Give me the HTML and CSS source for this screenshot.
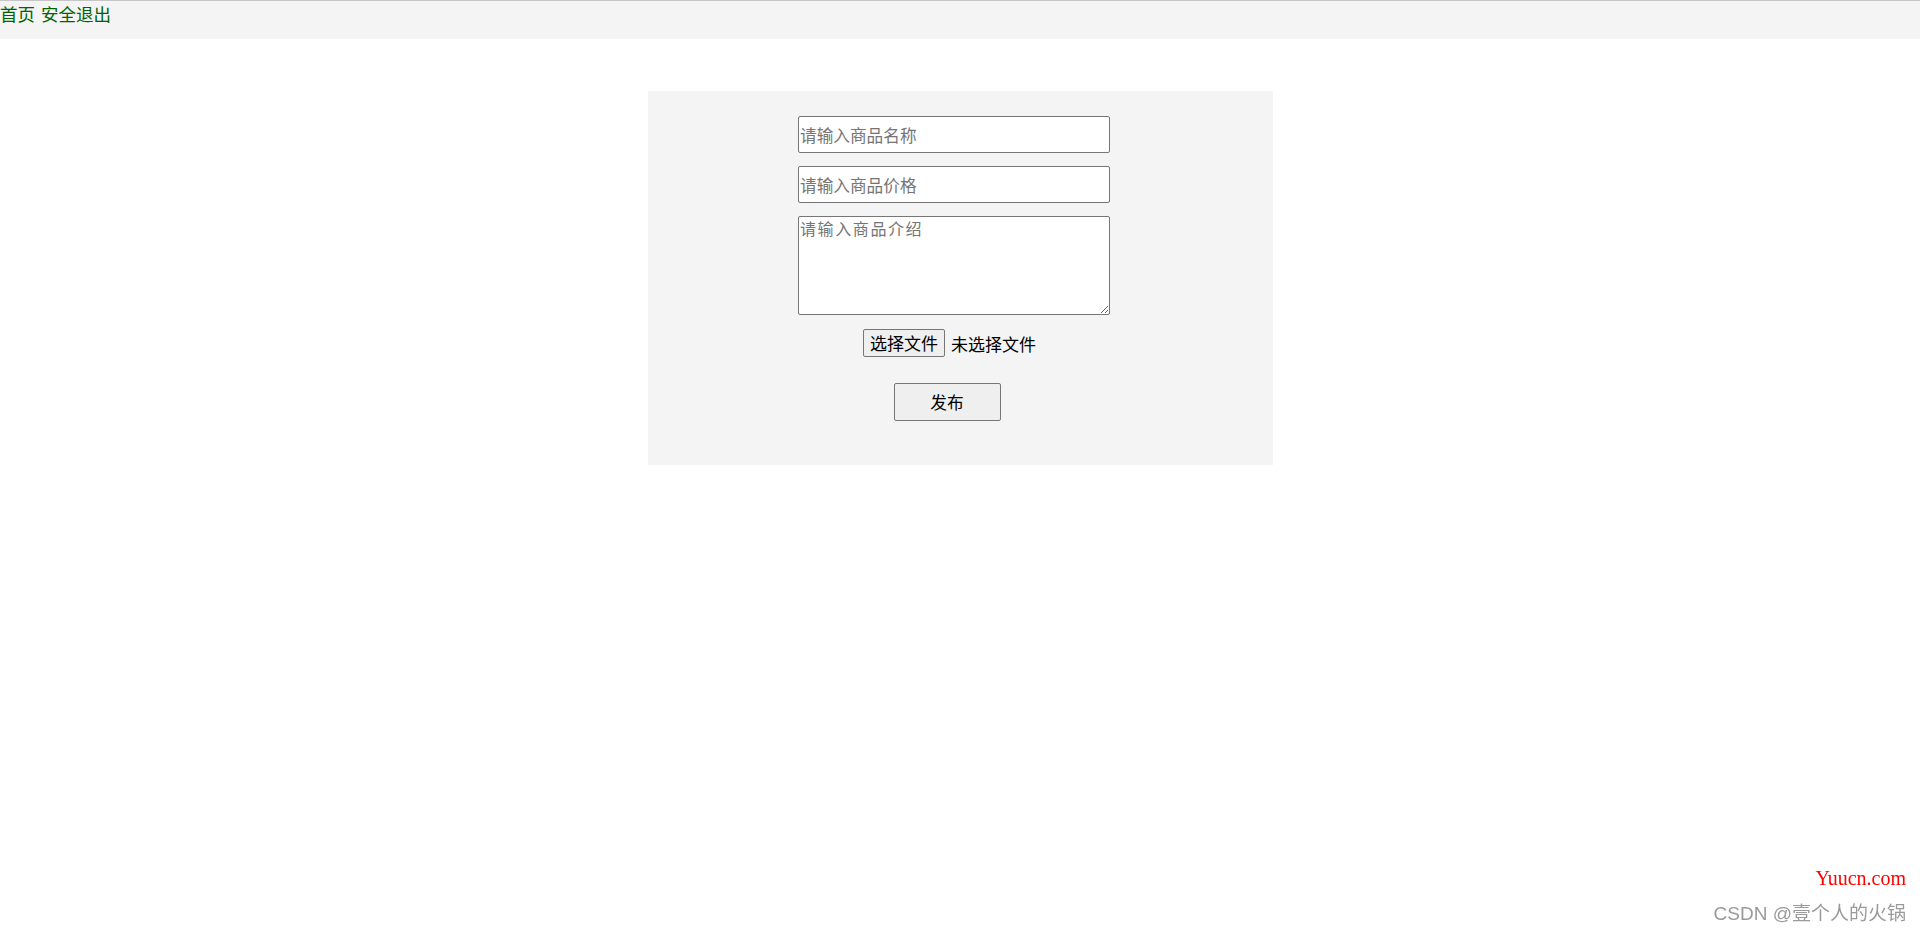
FILE: index.html
```html
<!DOCTYPE html>
<html lang="zh-CN">
<head>
    <meta charset="UTF-8">
    <meta name="viewport" content="width=device-width, initial-scale=1.0">
    <title>发布商品</title>
    <link rel="stylesheet" href="styles.css">
</head>
<body>
    <div class="top">
        <a href="index.html">首页</a>
        <a href="logout.html">安全退出</a>
    </div>

    <div class="box">
        <form class="publish" onsubmit="return false;">
            <input type="text" class="field" placeholder="请输入商品名称">
            <input type="text" class="field" placeholder="请输入商品价格">
            <textarea class="field intro" placeholder="请输入商品介绍"></textarea>
            <div class="file-row">
                <label class="file-btn">选择文件<input type="file" class="hidden"></label>
                <span class="file-name">未选择文件</span>
            </div>
            <button class="submit">发布</button>
        </form>
    </div>

    <div class="mark">
        <div class="mark-site">Yuucn.com</div>
        <div class="mark-user">CSDN @壹个人的火锅</div>
    </div>
</body>
</html>
```

FILE: styles.css
```css
body {
    margin: 0;
    font-family: "Noto Sans CJK SC", "Noto Sans", sans-serif;
    font-size: 16.67px;
    color: #000;
    background: #fff;
}
.top {
    height: 38px;
    border-top: 1px solid #c6c6c6;
    background-color: #f4f4f4;
    font-size: 17.5px;
    line-height: 25px;
    word-spacing: 2px;
}
.top a {
    color: #006400;
    text-decoration: none;
}
.box {
    width: 625px;
    margin: 52px auto 0;
    padding: 25px 0 44px;
    background-color: #f4f4f4;
}
.publish {
    display: flex;
    flex-direction: column;
    align-items: center;
}
.field {
    box-sizing: border-box;
    width: 312px;
    height: 37px;
    margin: 0 12px 13px 0;
    padding: 0 1px;
    border: 1px solid #767676;
    border-radius: 2px;
    background: #fff;
    font-family: "Noto Sans CJK SC", sans-serif;
    font-size: 16.67px;
}
.field::placeholder {
    color: #757575;
}
.intro {
    height: 99px;
    margin-bottom: 14px;
    padding: 0 1px;
    font-size: 16px;
    line-height: 22px;
    letter-spacing: 1.6px;
    resize: vertical;
}
.file-row {
    display: flex;
    align-items: center;
    gap: 6px;
    margin-right: 21px;
    height: 28px;
    font-size: 17px;
}
.file-btn {
    box-sizing: border-box;
    height: 28px;
    padding: 0 6px;
    border: 1px solid #767676;
    border-radius: 2px;
    background-color: #efefef;
    line-height: 26px;
    cursor: pointer;
}
.hidden {
    display: none;
}
.submit {
    box-sizing: border-box;
    width: 107px;
    height: 38px;
    margin: 26px 26px 0 0;
    border: 1px solid #767676;
    border-radius: 2px;
    background-color: #efefef;
    font-family: "Noto Sans CJK SC", sans-serif;
    font-size: 16.67px;
    color: #000;
    cursor: pointer;
}
.mark {
    position: fixed;
    right: 14px;
    bottom: 6px;
    text-align: right;
}
.mark-site {
    color: #ff0000;
    font-family: "Liberation Serif", serif;
    font-size: 20px;
    line-height: 22px;
    margin-bottom: 13px;
}
.mark-user {
    color: #9a9a9a;
    font-family: "Liberation Sans", "Noto Sans CJK SC", sans-serif;
    font-size: 19px;
    line-height: 24px;
}
```
